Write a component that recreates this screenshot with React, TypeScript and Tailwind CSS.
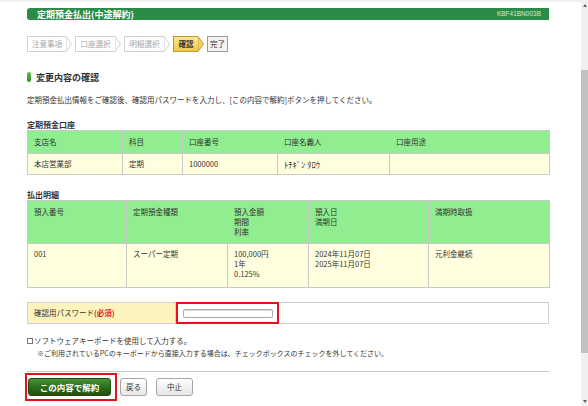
import React from "react";

const steps = [
  { label: "注意事項", w: "w-[39px]", state: "done" },
  { label: "口座選択", w: "w-[40px]", state: "done" },
  { label: "明細選択", w: "w-[40px]", state: "done" },
  { label: "確認", w: "w-[25px]", state: "current" },
];

function Step({ label, w, state }: { label: string; w: string; state: string }) {
  const current = state === "current";
  return (
    <div className="flex h-[16px] items-stretch">
      <div
        className={`${w} flex items-center justify-center border-y border-l text-[7.5px] leading-none ${
          current
            ? "border-[#b89c36] bg-gradient-to-b from-[#fbe98e] to-[#efc846] font-bold text-[#333]"
            : "border-[#cfcfcf] bg-white text-[#a8a8a8]"
        }`}
      >
        {label}
      </div>
      <svg width="6" height="16" viewBox="0 0 6 16" className="block">
        <polygon
          points="0,0.5 5.5,8 0,15.5"
          fill={current ? "#f4d560" : "#fff"}
          stroke={current ? "#b89c36" : "#cfcfcf"}
          strokeWidth="1"
        />
      </svg>
    </div>
  );
}

const th = "border border-[#c9c9c9] bg-[#90ee90] px-[6px] text-left font-normal";
const td = "border border-[#c9c9c9] bg-[#ffffe0] px-[6px] text-left";

export default function App() {
  return (
    <div className="flex h-[406px] w-[588px] overflow-hidden bg-white font-['Noto_Sans_CJK_JP',sans-serif] text-[7.5px] leading-[10px] text-[#333]">
      <div className="flex-1">
        <div className="h-[2px] bg-[#efefef]" />
        <div className="ml-[27px] w-[522px]">
          {/* title bar */}
          <div className="mt-[6px] flex h-[12px] items-center justify-between rounded-l-[3px] bg-[#2a8c46] pl-[10px] pr-[8px]">
            <span className="text-[9px] font-bold leading-none text-white">定期預金払出(中途解約)</span>
            <span className="font-['Liberation_Sans',sans-serif] text-[6.5px] leading-none text-[#d5ecd8]">KBF41BN003B</span>
          </div>

          {/* steps */}
          <div className="mt-[16px] flex gap-[3px]">
            {steps.map((s) => (
              <Step key={s.label} {...s} />
            ))}
            <div className="flex h-[16px] w-[21px] items-center justify-center border border-[#9a9a9a] bg-[#f3f3f3] text-[7.5px] leading-none">
              完了
            </div>
          </div>

          {/* heading */}
          <div className="mt-[20px] flex h-[10px] items-center gap-[5px]">
            <div className="h-[10px] w-[4px] rounded-[2px] bg-gradient-to-b from-[#6cc04a] to-[#2f8a2a]" />
            <span className="text-[9px] font-bold leading-none">変更内容の確認</span>
          </div>

          <p className="mt-[13px] h-[10px]">
            定期預金払出情報をご確認後、確認用パスワードを入力し、[この内容で解約]ボタンを押してください。
          </p>

          <p className="mt-[15px] h-[10px] text-[8px] font-bold">定期預金口座</p>
          <table className="w-[522px] table-fixed border-collapse">
            <colgroup>
              <col className="w-[95px]" />
              <col className="w-[60px]" />
              <col className="w-[95px]" />
              <col className="w-[112px]" />
              <col className="w-[160px]" />
            </colgroup>
            <thead>
              <tr className="h-[23px]">
                <th className={th}>支店名</th>
                <th className={th}>科目</th>
                <th className={th}>口座番号</th>
                <th className={th}>口座名義人</th>
                <th className={th}>口座用途</th>
              </tr>
            </thead>
            <tbody>
              <tr className="h-[21px]">
                <td className={td}>本店営業部</td>
                <td className={td}>定期</td>
                <td className={td}>1000000</td>
                <td className={`${td} text-[8.5px]`}>ﾄﾁｷﾞﾝ ﾀﾛｳ</td>
                <td className={td}></td>
              </tr>
            </tbody>
          </table>

          <p className="mt-[15px] h-[10px] text-[8px] font-bold">払出明細</p>
          <table className="w-[522px] table-fixed border-collapse">
            <colgroup>
              <col className="w-[99px]" />
              <col className="w-[101px]" />
              <col className="w-[81px]" />
              <col className="w-[120px]" />
              <col className="w-[121px]" />
            </colgroup>
            <thead>
              <tr className="h-[43px]">
                <th className={`${th} pt-[6px] align-top`}>預入番号</th>
                <th className={`${th} pt-[6px] align-top`}>定期預金種類</th>
                <th className={`${th} pt-[6px] align-top`}>
                  預入金額
                  <br />
                  期間
                  <br />
                  利率
                </th>
                <th className={`${th} pt-[6px] align-top`}>
                  預入日
                  <br />
                  満期日
                </th>
                <th className={`${th} pt-[6px] align-top`}>満期時取扱</th>
              </tr>
            </thead>
            <tbody>
              <tr className="h-[44px]">
                <td className={`${td} pt-[5px] align-top`}>001</td>
                <td className={`${td} pt-[5px] align-top`}>スーパー定期</td>
                <td className={`${td} pt-[5px] align-top`}>
                  100,000円
                  <br />
                  1年
                  <br />
                  0.125%
                </td>
                <td className={`${td} pt-[5px] align-top`}>
                  2024年11月07日
                  <br />
                  2025年11月07日
                </td>
                <td className={`${td} pt-[5px] align-top`}>元利金継続</td>
              </tr>
            </tbody>
          </table>

          {/* password */}
          <div className="mt-[14px] flex h-[22px]">
            <div className="flex w-[149px] items-center border border-[#cfcfcf] bg-[#fdf3bf] px-[6px]">
              確認用パスワード<span className="font-bold text-[#d4261c]">(必須)</span>
            </div>
            <div className="flex w-[103px] items-center justify-center border-2 border-[#e3121c]">
              <input
                type="password"
                className="h-[9px] w-[90px] rounded-[2px] border border-[#a9a9a9] bg-white shadow-[inset_0_1px_1px_rgba(0,0,0,0.15)]"
              />
            </div>
            <div className="flex-1 border-y border-r border-[#cfcfcf]" />
          </div>

          <div className="mt-[11px] leading-[12px]">
            <div className="flex items-center gap-[1px]">
              <span className="inline-block h-[6px] w-[6px] border border-[#777] bg-white" />
              <span>ソフトウェアキーボードを使用して入力する。</span>
            </div>
            <div className="pl-[10px] text-[7px]">
              ※ご利用されているPCのキーボードから直接入力する場合は、チェックボックスのチェックを外してください。
            </div>
          </div>

          <div className="mt-[12px] h-px bg-[#cccccc]" />

          {/* buttons */}
          <div className="mt-px flex items-center">
            <div className="-ml-[2px] flex h-[28px] w-[92px] items-center border-2 border-[#e3121c] pl-px">
              <button className="flex h-[18px] w-[83px] items-center justify-center rounded-[3px] border border-[#1a4d10] bg-gradient-to-b from-[#4a9236] via-[#2c6e1d] to-[#1c5510] text-[8.5px] font-bold leading-none text-white">
                この内容で解約
              </button>
            </div>
            <button className="ml-[3px] flex h-[18px] w-[27px] items-center justify-center rounded-[3px] border border-[#a5a5a5] bg-gradient-to-b from-white to-[#e6e6e6] text-[7.5px] leading-none text-[#333]">
              戻る
            </button>
            <button className="ml-[9px] flex h-[18px] w-[37px] items-center justify-center rounded-[3px] border border-[#a5a5a5] bg-gradient-to-b from-white to-[#e6e6e6] text-[7.5px] leading-none text-[#333]">
              中止
            </button>
          </div>
        </div>
      </div>

      {/* scrollbar */}
      <div className="flex w-[7px] flex-col bg-[#f0f0f0]">
        <div className="flex h-[10px] items-center justify-center">
          <svg width="4" height="3" viewBox="0 0 4 3">
            <polygon points="2,0 4,3 0,3" fill="#606060" />
          </svg>
        </div>
        <div className="mt-[60px] h-[283px] bg-[#c1c1c1]" />
        <div className="flex-1" />
        <div className="flex h-[10px] items-center justify-center">
          <svg width="4" height="3" viewBox="0 0 4 3">
            <polygon points="0,0 4,0 2,3" fill="#606060" />
          </svg>
        </div>
      </div>
    </div>
  );
}
